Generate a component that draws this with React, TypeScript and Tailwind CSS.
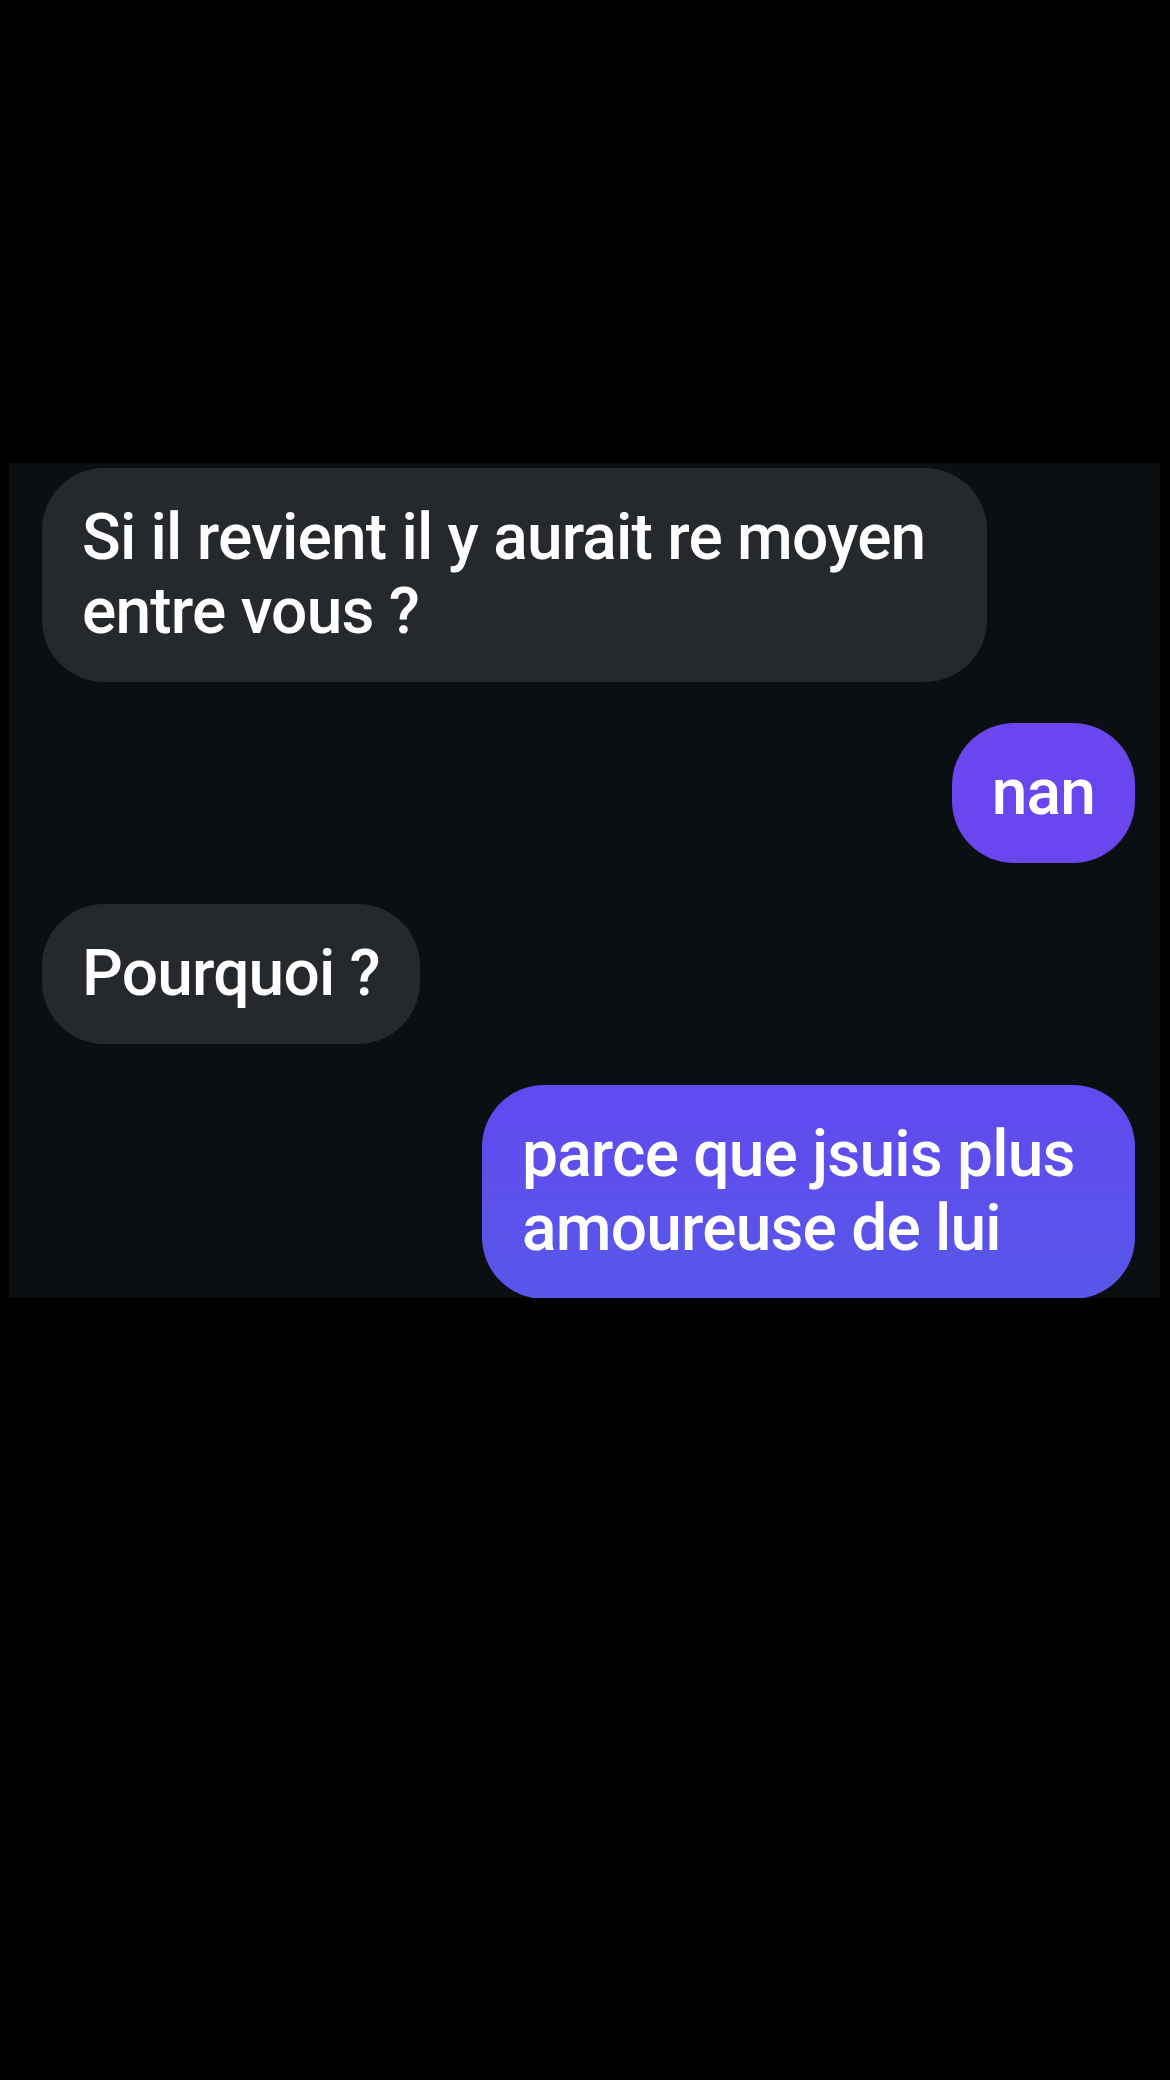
import React from "react";

interface Message {
  id: number;
  text: string;
  mine: boolean;
  width?: string;
}

const messages: Message[] = [
  { id: 1, text: "Si il revient il y aurait re moyen entre vous ?", mine: false, width: "w-[945px]" },
  { id: 2, text: "nan", mine: true },
  { id: 3, text: "Pourquoi ?", mine: false },
  { id: 4, text: "parce que jsuis plus amoureuse de lui", mine: true, width: "w-[653px]" },
];

const Bubble: React.FC<{ msg: Message }> = ({ msg }) => {
  const base =
    "rounded-[62px] px-[40px] py-[33px] text-[64px] leading-[74px] font-medium tracking-[-0.8px] text-white";
  if (msg.mine) {
    const bg =
      msg.id === 2
        ? "bg-[#6a46ef]"
        : "bg-gradient-to-b from-[#6149ef] to-[#5857e9]";
    return (
      <div className={`self-end ${base} ${bg} ${msg.width ?? ""}`}>{msg.text}</div>
    );
  }
  return (
    <div className={`self-start ${base} bg-[#25282d] ${msg.width ?? ""}`}>{msg.text}</div>
  );
};

export default function App() {
  return (
    <div
      className="w-[1170px] h-[2080px] bg-black pt-[463px] pl-[9px]"
      style={{ fontFamily: "Roboto, 'Noto Sans', sans-serif" }}
    >
      <div className="w-[1151px] h-[835px] overflow-hidden bg-[#0c0f12] flex flex-col gap-[41px] pt-[5px] pl-[33px] pr-[25px]">
        {messages.map((m) => (
          <Bubble key={m.id} msg={m} />
        ))}
      </div>
    </div>
  );
}
